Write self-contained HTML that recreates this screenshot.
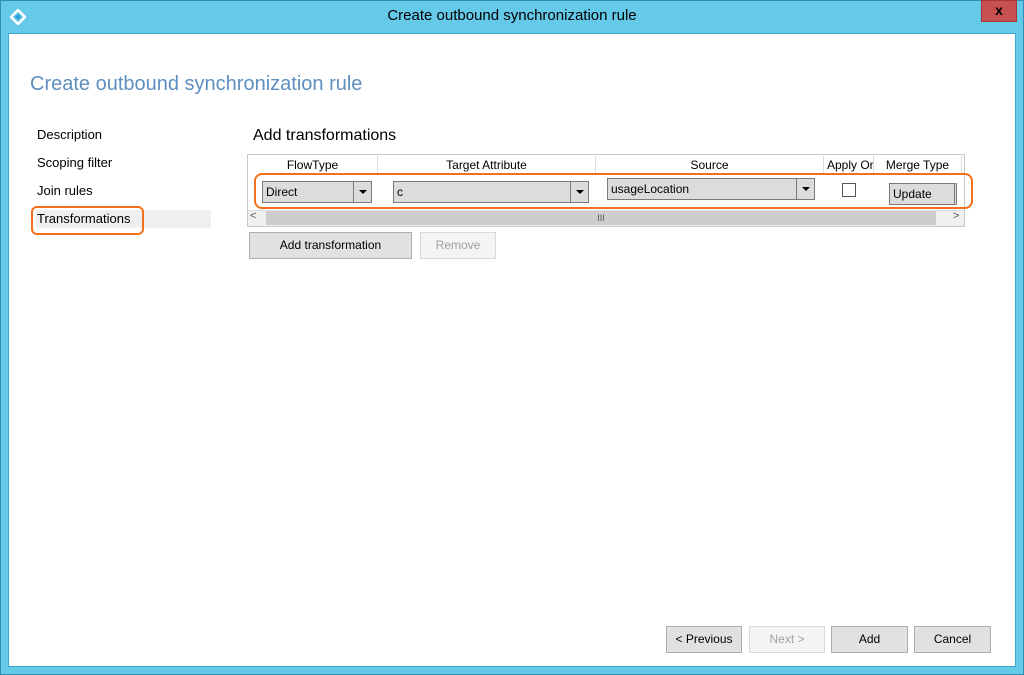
<!DOCTYPE html>
<html><head><meta charset="utf-8"><style>
*{box-sizing:border-box;margin:0;padding:0}
body{width:1024px;height:675px;background:#65c9e9;font-family:"Liberation Sans",sans-serif;position:relative;overflow:hidden}
.a{position:absolute}
.client{left:8px;top:33px;width:1008px;height:634px;background:#fff;border:1px solid #3ea6c8}
.btn{position:absolute;background:#e1e1e1;border:1px solid #adadad;font-size:12px;text-align:center;color:#000}
.dis{background:#f4f4f4;border-color:#d9d9d9;color:#a0a0a0}
.combo{position:absolute;background:#dcdcdc;border:1px solid #7a7a7a;font-size:12px;padding:3px 3px;color:#000}
.combo .ar{position:absolute;right:0;top:0;bottom:0;width:18px;border-left:1px solid #7a7a7a}
.combo .ar:after{content:"";position:absolute;left:5px;top:8px;border:4px solid transparent;border-top:4px solid #000}
.hd{position:absolute;top:156px;font-size:12px;text-align:center;height:18px;line-height:18px;border-right:1px solid #ddd}
.nav{position:absolute;left:37px;font-size:13px;color:#000}
</style></head><body>
<div class="a" style="left:0;top:0;width:1024px;height:675px;border:1px solid #2e8fb0"></div>
<svg class="a" style="left:10px;top:9px" width="16" height="16" viewBox="0 0 16 16"><path d="M8 1L15 8L8 15L1 8Z" fill="none" stroke="#fff" stroke-width="2.5"/><path d="M8 5L11 8L8 11L5 8Z" fill="#2a9fd8"/></svg>
<div class="a" style="left:0;top:7px;width:1024px;text-align:center;font-size:15px;color:#000">Create outbound synchronization rule</div>
<div class="a" style="left:981px;top:0;width:36px;height:22px;background:#c75050;border:1px solid #a33;color:#000;font-weight:bold;font-size:14px;text-align:center;line-height:19px">x</div>
<div class="a client"></div>
<div class="a" style="left:30px;top:73px;font-size:20px;color:#5f8fbf">Create outbound synchronization rule</div>
<div class="nav" style="top:127px">Description</div>
<div class="nav" style="top:155px">Scoping filter</div>
<div class="nav" style="top:183px">Join rules</div>
<div class="a" style="left:36px;top:210px;width:175px;height:18px;background:#efefef"></div>
<div class="nav" style="top:211px">Transformations</div>
<div class="a" style="left:31px;top:206px;width:113px;height:29px;border:2.5px solid #f36f1b;border-radius:6px"></div>
<div class="a" style="left:253px;top:127px;font-size:16px;color:#000">Add transformations</div>
<div class="a" style="left:247px;top:154px;width:718px;height:73px;border:1px solid #c8c8c8;background:#fff"></div>
<div class="hd" style="left:248px;width:130px">FlowType</div>
<div class="hd" style="left:378px;width:218px">Target Attribute</div>
<div class="hd" style="left:596px;width:228px">Source</div>
<div class="hd" style="left:824px;width:50px;overflow:hidden;white-space:nowrap;text-align:left;padding-left:3px">Apply Or</div>
<div class="hd" style="left:874px;width:88px">Merge Type</div>
<div class="combo" style="left:262px;top:181px;width:110px;height:22px">Direct<span class="ar"></span></div>
<div class="combo" style="left:393px;top:181px;width:196px;height:22px">c<span class="ar"></span></div>
<div class="combo" style="left:607px;top:178px;width:208px;height:22px">usageLocation<span class="ar"></span></div>
<div class="a" style="left:842px;top:183px;width:14px;height:14px;border:1px solid #555;background:#fff"></div>
<div class="combo" style="left:889px;top:183px;width:68px;height:22px;border-right:3px double #7a7a7a">Update</div>
<div class="a" style="left:248px;top:210px;width:716px;height:16px;background:#f0f0f0;border-top:1px solid #ddd"></div>
<div class="a" style="left:250px;top:210px;font-size:11px;color:#555">&lt;</div>
<div class="a" style="left:266px;top:211px;width:670px;height:14px;background:#cdcdcd;font-size:9px;text-align:center;line-height:14px;color:#555">III</div>
<div class="a" style="left:953px;top:210px;font-size:11px;color:#555">&gt;</div>
<div class="a" style="left:254px;top:173px;width:719px;height:36px;border:2.5px solid #f36f1b;border-radius:8px"></div>
<div class="btn" style="left:249px;top:232px;width:163px;height:27px;line-height:25px">Add transformation</div>
<div class="btn dis" style="left:420px;top:232px;width:76px;height:27px;line-height:25px">Remove</div>
<div class="btn" style="left:666px;top:626px;width:76px;height:27px;line-height:25px">&lt; Previous</div>
<div class="btn dis" style="left:749px;top:626px;width:76px;height:27px;line-height:25px">Next &gt;</div>
<div class="btn" style="left:831px;top:626px;width:77px;height:27px;line-height:25px">Add</div>
<div class="btn" style="left:914px;top:626px;width:77px;height:27px;line-height:25px">Cancel</div>
</body></html>
